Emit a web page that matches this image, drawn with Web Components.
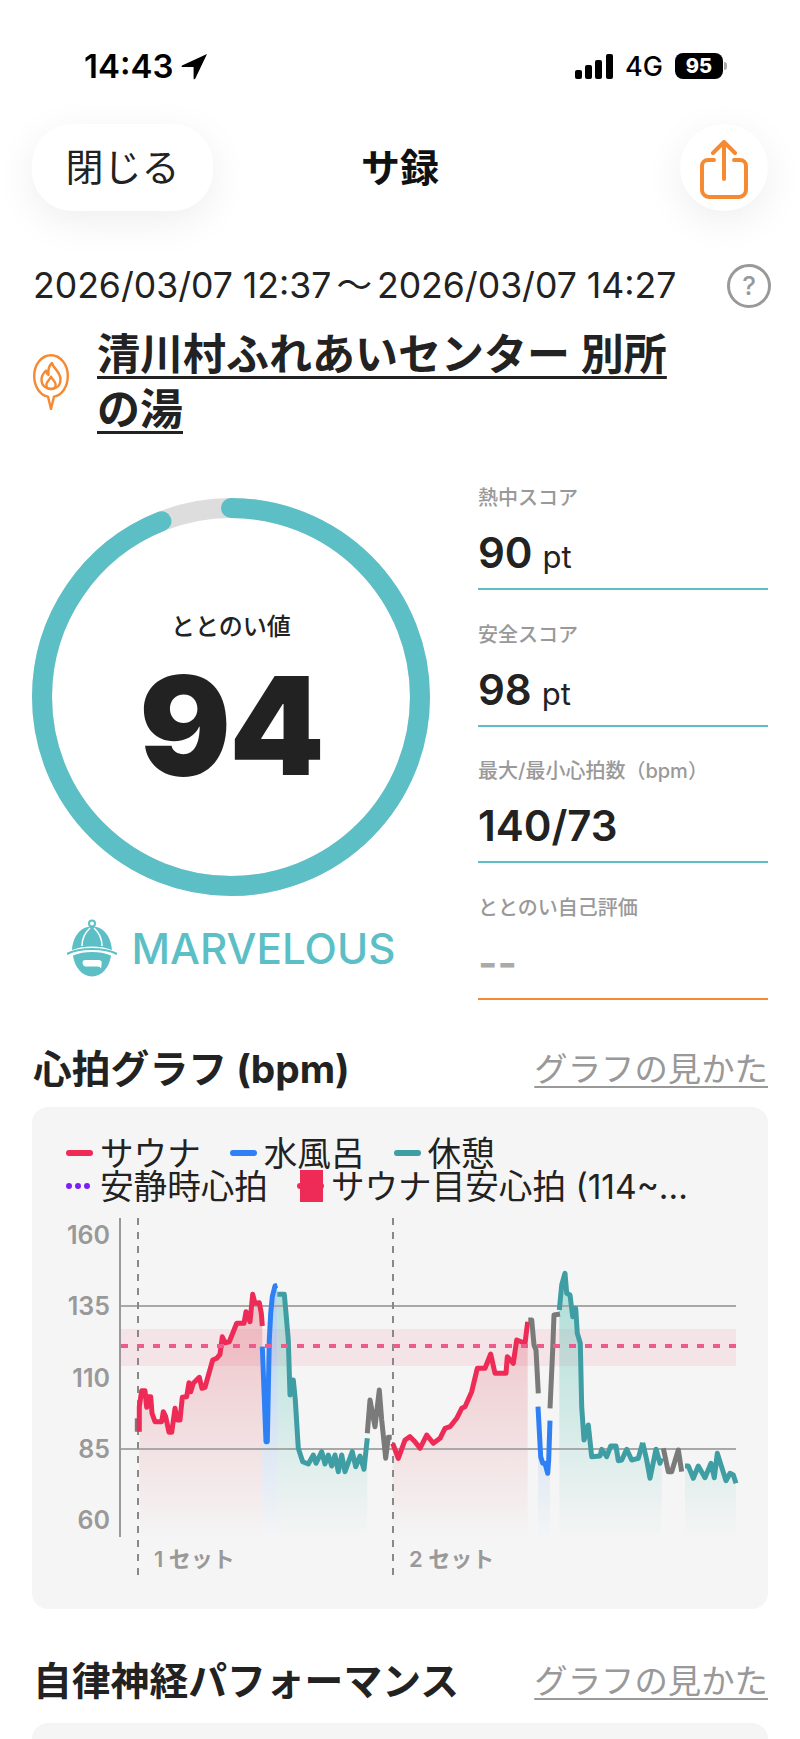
<!DOCTYPE html>
<html lang="ja">
<head>
<meta charset="utf-8">
<title>サ録</title>
<style>
  html, body { margin: 0; padding: 0; background: #fff; }
  body { width: 800px; height: 1739px; overflow: hidden; color: #222; font-family: Inter, "Noto Sans CJK JP", sans-serif; }
</style>
</head>
<body>
<status-bar></status-bar>
<nav-bar></nav-bar>
<session-meta></session-meta>
<score-panel>
  <stat-item label="熱中スコア" value="90" unit="pt"></stat-item>
  <stat-item label="安全スコア" value="98" unit="pt"></stat-item>
  <stat-item label="最大/最小心拍数（bpm）" value="140/73"></stat-item>
  <stat-item label="ととのい自己評価" value="--" empty></stat-item>
</score-panel>
<section-head style="margin-top:45px">心拍グラフ (bpm)</section-head>
<hr-card></hr-card>
<section-head style="margin-top:48px">自律神経パフォーマンス</section-head>
<empty-card></empty-card>

<script>
const FONT = 'Inter, "Noto Sans CJK JP", sans-serif';

class StatusBar extends HTMLElement {
  connectedCallback() {
    this.attachShadow({ mode: 'open' });
    this.shadowRoot.innerHTML = `
      <style>
        :host { display: flex; box-sizing: border-box; height: 124px; padding: 8px 73px 0 84px; align-items: center; justify-content: space-between; font-family: ${FONT}; color: #000; }
        .left, .right { display: flex; align-items: center; }
        .time { font-size: 33px; font-weight: 600; }
        .net { font-size: 27px; font-weight: 500; margin: 0 12px 0 12px; }
        .batt { width: 48px; height: 26px; border-radius: 8px; background: #000; color: #fff; font-size: 20px; font-weight: 800; display: flex; align-items: center; justify-content: center; }
        .tip { width: 3px; height: 8px; margin-left: 1px; background: #aaa; border-radius: 0 3px 3px 0; }
      </style>
      <div class="left">
        <span class="time">14:43</span>
        <svg width="27" height="27" viewBox="0 0 27 27" style="margin-left:8px"><path d="M26 1 1 12.500c-.8.5-.5 1.600.4 1.600H12.600V25.400c0 1 1.100 1.200 1.600.4L26 1z" fill="#000"/></svg>
      </div>
      <div class="right">
        <svg width="38" height="25" viewBox="0 0 38 25"><rect x="0" y="16" width="7" height="9" rx="2"/><rect x="10" y="11" width="7" height="14" rx="2"/><rect x="20" y="6" width="7" height="19" rx="2"/><rect x="31" y="0" width="7" height="25" rx="2"/></svg>
        <span class="net">4G</span>
        <span class="batt">95</span><span class="tip"></span>
      </div>`;
  }
}
customElements.define('status-bar', StatusBar);

class NavBar extends HTMLElement {
  connectedCallback() {
    this.attachShadow({ mode: 'open' });
    this.shadowRoot.innerHTML = `
      <style>
        :host { display: grid; grid-template-columns: 1fr auto 1fr; align-items: center; height: 87px; padding: 0 32px; font-family: ${FONT}; }
        .close { box-sizing: border-box; justify-self: start; width: 181px; height: 87px; padding-bottom: 6px; border-radius: 40px; background: #fff; box-shadow: 0 10px 40px rgba(0,0,0,.07); display: flex; align-items: center; justify-content: center; font-size: 38px; color: #222; }
        .title { padding-bottom: 6px; font-size: 39px; font-weight: 700; color: #111; }
        .share { box-sizing: border-box; justify-self: end; width: 88px; height: 87px; padding-top: 4px; border-radius: 50%; background: #fff; box-shadow: 0 10px 40px rgba(0,0,0,.07); display: flex; align-items: center; justify-content: center; }
      </style>
      <div class="close">閉じる</div>
      <div class="title">サ録</div>
      <div class="share">
        <svg width="50" height="60" viewBox="0 0 50 60" fill="none" stroke="#F58A33" stroke-width="4" stroke-linecap="round" stroke-linejoin="round">
          <path d="M15 20H9a6 6 0 0 0-6 6v24a7 7 0 0 0 7 7h30a7 7 0 0 0 7-7V26a6 6 0 0 0-6-6h-6"/>
          <path d="M25 39V3M14 13 25 2l11 11"/>
        </svg>
      </div>`;
  }
}
customElements.define('nav-bar', NavBar);

class SessionMeta extends HTMLElement {
  connectedCallback() {
    this.attachShadow({ mode: 'open' });
    this.shadowRoot.innerHTML = `
      <style>
        :host { display: block; box-sizing: border-box; height: 231px; padding: 51px 29px 0 33px; font-family: ${FONT}; color: #222; }
        .date { display: flex; justify-content: space-between; align-items: center; height: 48px; font-size: 35.600px; line-height: 48px; white-space: nowrap; }
        .wave { margin: 0 5px; }
        .help { width: 38px; height: 38px; border: 3.500px solid #999; border-radius: 50%; color: #999; font-size: 26px; font-weight: 500; line-height: 38px; text-align: center; }
        .place { display: flex; align-items: center; gap: 28px; margin-top: 17px; }
        .name { font-size: 43px; font-weight: 600; line-height: 55px; text-decoration: underline; text-underline-offset: 6px; text-decoration-thickness: 3px; width: 580px; }
      </style>
      <div class="date"><span>2026/03/07 12:37<span class="wave">～</span>2026/03/07 14:27</span><span class="help">?</span></div>
      <div class="place">
        <svg width="36" height="56" viewBox="0 0 36 56" fill="none" stroke="#F58A33" stroke-width="2.400" stroke-linejoin="round" style="flex:none">
          <path d="M18 55 15 42.600C7.400 41.400 1.200 33 1.200 22 1.200 10.400 8.600 1.200 18 1.200S34.800 10.400 34.800 22c0 11-6.200 19.400-13.800 20.600L18 55z"/>
          <path d="M19 9c.8 5 8.500 8.500 8.500 16.500C27.500 31.500 23.500 35 18 35S8.500 31.500 8.500 25.500c0-4 2-6.500 4.500-9 .2 2.200 1 3.700 2.500 4.500C15 16.500 15.800 12 19 9z"/>
          <path d="M18 35c-3 0-4.700-1.800-4.700-4.300 0-3.200 3.400-4.400 4.700-8 1.600 3.300 4.700 4.800 4.700 8 0 2.500-1.700 4.300-4.700 4.300z"/>
        </svg>
        <div class="name">清川村ふれあいセンター 別所の湯</div>
      </div>`;
  }
}
customElements.define('session-meta', SessionMeta);

class ScorePanel extends HTMLElement {
  connectedCallback() {
    this.attachShadow({ mode: 'open' });
    this.shadowRoot.innerHTML = `
      <style>
        :host { display: grid; grid-template-columns: 398px 290px; column-gap: 48px; padding: 42px 32px 0; font-family: ${FONT}; color: #222; }
        .left { display: flex; flex-direction: column; align-items: center; padding-top: 14px; }
        .ring { position: relative; width: 398px; height: 398px; }
        .ring svg { display: block; }
        .center { position: absolute; inset: 0; display: flex; flex-direction: column; align-items: center; }
        .cap { margin-top: 113px; font-size: 24px; line-height: 32px; font-weight: 500; }
        .num { margin-top: 8px; font-size: 136px; line-height: 150px; font-weight: 900; letter-spacing: -2px; }
        .rank { display: flex; align-items: center; gap: 15px; margin-top: 22px; height: 60px; color: #5CBFC6; font-size: 42.200px; font-weight: 500; }
        .stats { display: flex; flex-direction: column; gap: 30.500px; }
      </style>
      <div class="left">
        <div class="ring">
          <svg width="398" height="398" viewBox="0 0 398 398" fill="none" stroke-width="20">
            <circle cx="199" cy="199" r="189" stroke="#DDDDDD"/>
            <circle cx="199" cy="199" r="189" stroke="#5CBFC6" stroke-linecap="round" pathLength="100" stroke-dasharray="94 6" transform="rotate(-90 199 199)"/>
          </svg>
          <div class="center"><div class="cap">ととのい値</div><div class="num">94</div></div>
        </div>
        <div class="rank">
          <svg width="50" height="58" viewBox="0 0 50 58">
            <circle cx="25" cy="4.500" r="3" fill="none" stroke="#5CBFC6" stroke-width="2"/>
            <path d="M5 31C6 18 13 7.500 25 7.500S44 18 45 31c-6-2.500-13-3.500-20-3.500S11 28.500 5 31z" fill="#5CBFC6"/>
            <path d="M15 27c0-7 3-13.500 8-18M35 27c0-7-3-13.500-8-18" fill="none" stroke="#fff" stroke-width="1.500"/>
            <path d="M0 35c7-3.800 15-5 25-5s18 1.200 25 5" fill="none" stroke="#5CBFC6" stroke-width="2"/>
            <path d="M6 36.500c6-2.500 12-3.500 19-3.500s13 1 19 3.500C42.500 48 35 57.500 25 57.500S7.500 48 6 36.500z" fill="#5CBFC6"/>
            <path d="M15.500 43.500c0-1.700 1.200-2.500 2.800-2.500h13.400c2 0 3 1 3 2.500s-.5 4.500-.5 6c-1-1.300-2-2-3-2H18.300c-1.600 0-2.800-2.300-2.800-4z" fill="#fff"/>
          </svg>
          <span>MARVELOUS</span>
        </div>
      </div>
      <div class="stats"><slot></slot></div>`;
  }
}
customElements.define('score-panel', ScorePanel);

class StatItem extends HTMLElement {
  connectedCallback() {
    const empty = this.hasAttribute('empty');
    const unit = this.getAttribute('unit');
    this.attachShadow({ mode: 'open' });
    this.shadowRoot.innerHTML = `
      <style>
        :host { display: block; box-sizing: border-box; height: 106px; border-bottom: 2px solid ${empty ? '#F58A33' : '#5CBFC6'}; font-family: ${FONT}; }
        .label { font-size: 20px; line-height: 28px; font-weight: 500; color: #999; white-space: nowrap; }
        .value { margin-top: 15px; height: 52px; line-height: 52px; font-size: 42px; font-weight: 600; color: ${empty ? '#aaa' : '#222'}; white-space: nowrap; }
        .unit { font-size: 31px; font-weight: 400; margin-left: 10px; }
      </style>
      <div class="label">${this.getAttribute('label')}</div>
      <div class="value">${this.getAttribute('value')}${unit ? `<span class="unit">${unit}</span>` : ''}</div>`;
  }
}
customElements.define('stat-item', StatItem);

class SectionHead extends HTMLElement {
  connectedCallback() {
    this.attachShadow({ mode: 'open' });
    this.shadowRoot.innerHTML = `
      <style>
        :host { display: flex; box-sizing: border-box; justify-content: space-between; align-items: center; height: 50px; padding: 0 32px 7px 33px; font-family: ${FONT}; }
        .t { font-size: 38.800px; font-weight: 700; color: #222; }
        .l { font-size: 33.400px; color: #999; text-decoration: underline; text-underline-offset: 5px; text-decoration-thickness: 2px; }
      </style>
      <span class="t"><slot></slot></span>
      <span class="l">グラフの見かた</span>`;
  }
}
customElements.define('section-head', SectionHead);

class LegendItem extends HTMLElement {
  connectedCallback() {
    const kind = this.getAttribute('kind');
    const color = this.getAttribute('color');
    let swatch = `<svg width="27" height="8"><line x1="3" x2="24" y1="4" y2="4" stroke="${color}" stroke-width="6" stroke-linecap="round"/></svg>`;
    if (kind === 'dots') swatch = `<svg width="27" height="8"><line x1="3" x2="25" y1="4" y2="4" stroke="${color}" stroke-width="6" stroke-linecap="round" stroke-dasharray="0 9"/></svg>`;
    if (kind === 'block') swatch = `<svg width="27" height="34"><line x1="3" x2="24" y1="17" y2="17" stroke="${color}" stroke-width="6" stroke-linecap="round"/><rect x="3" y="1" width="23" height="32" fill="${color}"/></svg>`;
    this.attachShadow({ mode: 'open' });
    this.shadowRoot.innerHTML = `
      <style>
        :host { display: inline-flex; align-items: center; gap: 7px; height: 33px; font-size: 33.600px; line-height: 33px; white-space: nowrap; color: #222; }
        svg { display: block; flex: none; }
      </style>
      ${swatch}<span><slot></slot></span>`;
  }
}
customElements.define('legend-item', LegendItem);

class HrChart extends HTMLElement {
  connectedCallback() {
    // points are read off the reference, a() left half, b() right half
    const a = p => p.map(([x, y]) => [20 + x / 3, 1200 + y / 3]);
    const b = p => p.map(([x, y]) => [400 + x / 3, 1200 + y / 3]);
    const RED = '#EE2B56', BLUE = '#2F80F5', TEAL = '#3F9EA3', GRAY = '#7A7A7A';
    const segs = [
      [GRAY, 0, a([[352,695],[352,655]])],
      [RED, 'r', a([[358,695],[358,620],[365,572],[375,572],[380,622],[385,590],[392,590],[396,640],[405,665],[425,665],[430,635],[437,650],[447,697],[455,697],[465,625],[472,660],[480,660],[487,592],[500,590],[507,548],[512,575],[520,550],[538,532],[546,565],[555,562],[578,480],[590,475],[600,463],[607,410],[615,428],[628,425],[650,370],[672,370],[678,335],[690,365],[698,283],[705,310],[718,308],[724,340],[727,378]])],
      [BLUE, 'bl', a([[727,440],[738,725],[742,725],[748,420],[752,340],[757,290],[765,258],[772,256]])],
      [TEAL, 't', a([[772,283],[793,283],[798,340],[805,420],[810,585],[815,540],[820,540],[826,600],[835,745],[848,785],[865,792],[880,765],[888,790],[905,755],[915,792],[925,765],[935,798],[945,765],[955,815],[965,765],[975,815],[997,755],[1007,800],[1020,768],[1032,808],[1042,715]])],
      [GRAY, 0, a([[1042,700],[1050,600],[1065,680],[1078,570],[1085,660],[1097,775],[1105,712],[1115,712]])],
      [RED, 'r', b([[-22,730],[-5,775],[15,720],[30,710],[45,725],[60,745],[80,705],[100,730],[120,715],[135,685],[150,680],[170,655],[185,625],[195,620],[215,575],[232,505],[255,505],[272,462],[285,520],[318,520],[322,470],[340,490],[350,420],[375,430],[383,365]])],
      [GRAY, 0, b([[385,360],[395,360],[402,435],[408,450],[415,580]])],
      [BLUE, 'bl', b([[414,620],[422,770],[428,790],[435,790],[443,820],[446,780],[450,662]])],
      [GRAY, 0, b([[450,625],[458,450],[462,345],[480,342]])],
      [TEAL, 't', b([[478,330],[485,255],[495,220],[500,280],[510,285],[518,350],[527,325],[532,400],[541,430],[545,620],[552,720],[565,675],[575,770],[600,768],[605,748],[620,770],[632,738],[648,738],[655,782],[665,780],[680,748],[695,780],[715,775],[728,728]])],
      [TEAL, 't', b([[728,728],[740,780],[750,835],[768,748],[780,790],[785,775]])],
      [GRAY, 0, b([[790,745],[805,815],[815,815],[835,750],[845,815]])],
      [TEAL, 't', b([[855,798],[865,798],[880,835],[895,798],[915,833],[933,790],[943,833],[952,760],[978,842],[990,820],[1000,825],[1008,850]])]
    ];
    const str = pts => pts.map(p => p.map(n => n.toFixed(1)).join(',')).join(' ');
    let areas = '', lines = '';
    for (const [color, fill, pts] of segs) {
      if (fill) {
        const x0 = pts[0][0], x1 = pts[pts.length - 1][0];
        areas += `<polygon points="${x0},1540 ${str(pts)} ${x1},1540" fill="url(#g-${fill})"/>`;
      }
      lines += `<polyline points="${str(pts)}" fill="none" stroke="${color}" stroke-width="5" stroke-linejoin="round"/>`;
    }
    const ticks = [[160, 1235], [135, 1306], [110, 1378], [85, 1449], [60, 1520]]
      .map(([t, y]) => `<text x="110" y="${y + 9}" text-anchor="end" font-size="25" font-weight="600" fill="#999">${t}</text>`).join('');
    this.attachShadow({ mode: 'open' });
    this.shadowRoot.innerHTML = `
      <style>
        :host { display: block; font-family: ${FONT}; }
        svg { display: block; }
        text { font-family: ${FONT}; }
      </style>
      <svg width="736" height="405" viewBox="32 1204 736 405">
        <defs>
          <linearGradient id="g-r" gradientUnits="userSpaceOnUse" x1="0" x2="0" y1="1310" y2="1540"><stop offset="0" stop-color="#E0505F" stop-opacity=".3"/><stop offset="1" stop-color="#E0505F" stop-opacity="0"/></linearGradient>
          <linearGradient id="g-t" gradientUnits="userSpaceOnUse" x1="0" x2="0" y1="1310" y2="1540"><stop offset="0" stop-color="#4DBFB0" stop-opacity=".38"/><stop offset="1" stop-color="#4DBFB0" stop-opacity="0"/></linearGradient>
          <linearGradient id="g-bl" gradientUnits="userSpaceOnUse" x1="0" x2="0" y1="1310" y2="1540"><stop offset="0" stop-color="#4A96F0" stop-opacity=".36"/><stop offset="1" stop-color="#4A96F0" stop-opacity="0"/></linearGradient>
        </defs>
        <rect x="121" y="1329" width="615" height="37" fill="#EE4F78" fill-opacity=".11"/>
        ${areas}
        <line x1="121" x2="736" y1="1306" y2="1306" stroke="#A8A8A8" stroke-width="2"/>
        <line x1="121" x2="736" y1="1449" y2="1449" stroke="#A8A8A8" stroke-width="2"/>
        <line x1="120" x2="120" y1="1218" y2="1537" stroke="#999" stroke-width="2"/>
        <line x1="138" x2="138" y1="1218" y2="1577" stroke="#888" stroke-width="2" stroke-dasharray="7 7"/>
        <line x1="393" x2="393" y1="1218" y2="1577" stroke="#888" stroke-width="2" stroke-dasharray="7 7"/>
        ${lines}
        <line x1="121" x2="736" y1="1346" y2="1346" stroke="#EF5A8C" stroke-width="4" stroke-dasharray="7 9"/>
        ${ticks}
        <text x="154" y="1567" font-size="22" font-weight="600" fill="#999">1 セット</text>
        <text x="409" y="1567" font-size="22" font-weight="600" fill="#999">2 セット</text>
      </svg>`;
  }
}
customElements.define('hr-chart', HrChart);

class HrCard extends HTMLElement {
  connectedCallback() {
    this.attachShadow({ mode: 'open' });
    this.shadowRoot.innerHTML = `
      <style>
        :host { display: block; box-sizing: border-box; height: 502px; margin: 12px 32px 0; padding-top: 30px; background: #F5F5F5; border-radius: 16px; overflow: hidden; font-family: ${FONT}; }
        .legend { display: flex; flex-direction: column; gap: 0; height: 67px; padding-left: 34px; }
        .row { display: flex; height: 33px; gap: 29px; }
      </style>
      <div class="legend">
        <div class="row">
          <legend-item color="#EE2B56">サウナ</legend-item>
          <legend-item color="#2F80F5">水風呂</legend-item>
          <legend-item color="#3F9EA3">休憩</legend-item>
        </div>
        <div class="row">
          <legend-item kind="dots" color="#7B1FF2">安静時心拍</legend-item>
          <legend-item kind="block" color="#EE2B56">サウナ目安心拍 (114~...</legend-item>
        </div>
      </div>
      <hr-chart></hr-chart>`;
  }
}
customElements.define('hr-card', HrCard);

class EmptyCard extends HTMLElement {
  connectedCallback() {
    this.attachShadow({ mode: 'open' });
    this.shadowRoot.innerHTML = `
      <style>
        :host { display: block; height: 60px; margin: 16px 32px 0; background: #F5F5F5; border-radius: 16px 16px 0 0; }
      </style>`;
  }
}
customElements.define('empty-card', EmptyCard);
</script>
</body>
</html>
